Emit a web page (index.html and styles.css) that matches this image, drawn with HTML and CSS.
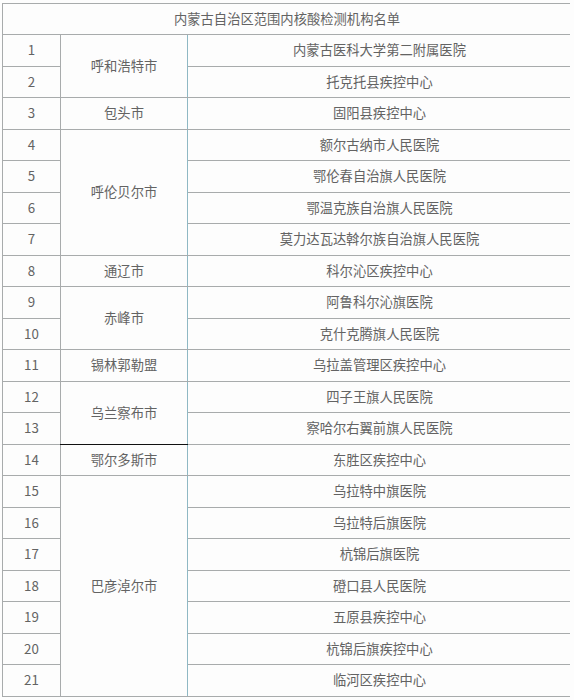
FILE: index.html
```html
<!DOCTYPE html>
<html lang="zh">
<head>
<meta charset="utf-8">
<title>内蒙古自治区范围内核酸检测机构名单</title>
<link rel="stylesheet" href="styles.css">
</head>
<body>
<table class="list">
  <colgroup><col class="c-no"><col class="c-city"><col class="c-org"></colgroup>
  <tr class="head"><td colspan="3">内蒙古自治区范围内核酸检测机构名单</td></tr>
  <tr><td>1</td><td rowspan="2" class="city">呼和浩特市</td><td class="org">内蒙古医科大学第二附属医院</td></tr>
  <tr><td>2</td><td class="org">托克托县疾控中心</td></tr>
  <tr><td>3</td><td class="city">包头市</td><td class="org">固阳县疾控中心</td></tr>
  <tr><td>4</td><td rowspan="4" class="city">呼伦贝尔市</td><td class="org">额尔古纳市人民医院</td></tr>
  <tr><td>5</td><td class="org">鄂伦春自治旗人民医院</td></tr>
  <tr><td>6</td><td class="org">鄂温克族自治旗人民医院</td></tr>
  <tr><td>7</td><td class="org">莫力达瓦达斡尔族自治旗人民医院</td></tr>
  <tr><td>8</td><td class="city">通辽市</td><td class="org">科尔沁区疾控中心</td></tr>
  <tr><td>9</td><td rowspan="2" class="city">赤峰市</td><td class="org">阿鲁科尔沁旗医院</td></tr>
  <tr><td>10</td><td class="org">克什克腾旗人民医院</td></tr>
  <tr><td>11</td><td class="city">锡林郭勒盟</td><td class="org">乌拉盖管理区疾控中心</td></tr>
  <tr><td>12</td><td rowspan="2" class="city dark">乌兰察布市</td><td class="org">四子王旗人民医院</td></tr>
  <tr><td>13</td><td class="org">察哈尔右翼前旗人民医院</td></tr>
  <tr><td>14</td><td class="city">鄂尔多斯市</td><td class="org">东胜区疾控中心</td></tr>
  <tr><td>15</td><td rowspan="7" class="city">巴彦淖尔市</td><td class="org">乌拉特中旗医院</td></tr>
  <tr><td>16</td><td class="org">乌拉特后旗医院</td></tr>
  <tr><td>17</td><td class="org">杭锦后旗医院</td></tr>
  <tr><td>18</td><td class="org">磴口县人民医院</td></tr>
  <tr><td>19</td><td class="org">五原县疾控中心</td></tr>
  <tr><td>20</td><td class="org">杭锦后旗疾控中心</td></tr>
  <tr><td>21</td><td class="org">临河区疾控中心</td></tr>
</table>
</body>
</html>
```
FILE: styles.css
```css
html { background: #fdfdfd; }
body {
  margin: 3px 4px 0 2px;
  font-family: "Noto Sans CJK SC", "Noto Sans", sans-serif;
  font-size: 13.3px;
  color: #636363;
}
.list {
  border-collapse: collapse;
  width: 569px;
  table-layout: fixed;
  border-left: 1px solid #333;
  border-top: 1px solid #555;
  border-right: 1px solid #555;
  border-bottom: 1px solid #444;
}
.c-no { width: 58px; }
.c-city { width: 127px; }
.c-org { width: 384px; }
.list td {
  border: 1px solid #a8abac;
  text-align: center;
  vertical-align: middle;
  padding: 0;
  line-height: 18px;
}
.list tr { height: 31.5px; }
.list tr.head { height: 31px; }
.list td.org { border-left-color: #8fb8c4; }
.list td.city { border-right-color: #8fb8c4; }
.list td.dark { border-bottom: 1px solid #111; }
```
